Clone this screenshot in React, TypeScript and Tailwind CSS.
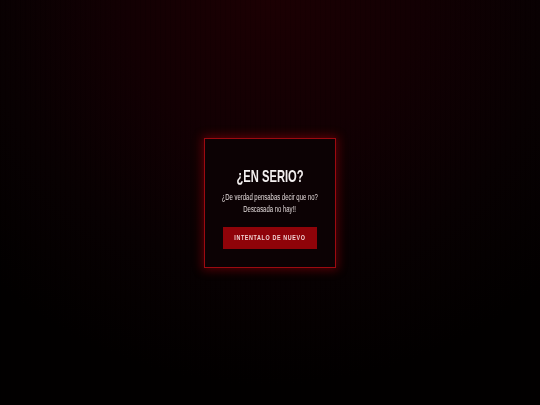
import React from 'react';

const FONT = '"Liberation Sans", Arial, sans-serif';

export default function App() {
  return (
    <div
      className="min-h-screen w-full flex items-center justify-center bg-[radial-gradient(ellipse_75%_95%_at_50%_0%,#1c0003_0%,#130003_35%,#080102_70%,#020000_100%)]"
      style={{ fontFamily: FONT }}
    >
      {/* faint vertical stripes */}
      <div className="fixed inset-0 pointer-events-none bg-[repeating-linear-gradient(90deg,rgba(0,0,0,0.1)_0px,rgba(0,0,0,0.1)_1px,transparent_1px,transparent_5px)]" />

      <div className="relative w-[132px] h-[130px] bg-[#0c0204] border border-[#9c0a10] shadow-[0_0_9px_2px_rgba(170,0,12,0.45)] flex flex-col items-center pt-[28px]">
        <h1 className="text-[16.7px] leading-[20px] font-bold text-[#f3efef] whitespace-nowrap">
          <span className="inline-block scale-x-[0.67]">¿EN SERIO?</span>
        </h1>
        <p className="mt-[4px] text-[8.5px] leading-[12px] text-[#e0d8d8] text-center whitespace-nowrap flex flex-col items-center">
          <span className="inline-block scale-x-[0.7]">¿De verdad pensabas decir que no?</span>
          <span className="inline-block scale-x-[0.7]">Descasada no hay!!</span>
        </p>
        <button className="mt-[12px] w-[94px] h-[22px] bg-[#8f0309] text-[#f2d4d4] text-[7.7px] font-bold whitespace-nowrap flex items-center justify-center">
          <span className="inline-block scale-x-[0.7] tracking-[0.9px]">INTENTALO DE NUEVO</span>
        </button>
      </div>
    </div>
  );
}
